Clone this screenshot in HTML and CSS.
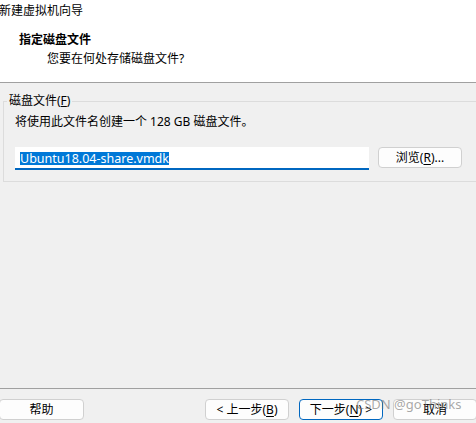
FILE: index.html
```html
<!DOCTYPE html>
<html>
  <head>
    <meta charset="utf-8">
    <title>新建虚拟机向导</title>
    <link rel="stylesheet" href="styles.css">
  </head>
  <body>

    <div class="header">
      <div class="win-title">新建虚拟机向导</div>
      <div class="step-title">指定磁盘文件</div>
      <div class="step-sub">您要在何处存储磁盘文件?</div>
    </div>

    <div class="content">
      <fieldset class="group">
	<legend>磁盘文件(<u>F</u>)</legend>
	<div class="group-body">
	  <p class="note">将使用此文件名创建一个 128 GB 磁盘文件。</p>
	  <div class="file-row">
	    <div class="textbox"><span class="selected">Ubuntu18.04-share.vmdk</span></div>
	    <button type="button" class="btn">浏览(<u>R</u>)...</button>
	  </div>
	</div>
      </fieldset>
    </div>

    <div class="footer">
      <button type="button" class="btn btn-help">帮助</button>
      <span class="spacer"></span>
      <button type="button" class="btn">&lt; 上一步(<u>B</u>)</button>
      <button type="button" class="btn btn-default">下一步(<u>N</u>) &gt;</button>
      <button type="button" class="btn btn-cancel">取消</button>
    </div>

    <div class="watermark">CSDN @goThinks</div>

  </body>
</html>
```

FILE: styles.css
```css
html,
body {
    margin: 0;
    height: 423px;
    overflow: hidden;
}

body {
    display: flex;
    flex-direction: column;
    background: #f0f0f0;
    color: #000;
    font-family: "Noto Sans", "Noto Sans CJK SC", sans-serif;
    font-size: 12px;
    line-height: 16px;
}

.header {
    height: 82px;
    background: #fff;
    border-bottom: 1px solid #a0a0a0;
}

.win-title {
    padding-top: 3px;
    margin-left: -1px;
}

.step-title {
    margin: 13px 0 0 19px;
    font-weight: bold;
}

.step-sub {
    margin: 3px 0 0 47px;
}

.content {
    flex: 1;
}

.group {
    margin: 10px -20px 0 3px;
    padding: 0 0 11px 0;
    border: 1px solid #dcdcdc;
}

.group legend {
    margin-left: 3px;
    padding: 0 2px;
}

.group-body {
    padding: 5px 0 0 11px;
}

.note {
    margin: 0;
}

.file-row {
    display: flex;
    align-items: flex-start;
    gap: 9px;
    margin-top: 17px;
}

.textbox {
    box-sizing: border-box;
    width: 354px;
    height: 23px;
    padding: 4px 0 0 5px;
    background: #fff;
    border-bottom: 2px solid #0067c0;
}

.selected {
    display: inline-block;
    background: #0078d7;
    color: #fff;
    line-height: 13px;
    font-size: 12.5px;
}

.btn {
    box-sizing: border-box;
    width: 84px;
    height: 21px;
    padding: 0;
    background: #fdfdfd;
    border: 1px solid #d0d0d0;
    border-radius: 4px;
    font: inherit;
    color: #000;
}

.btn u {
    text-underline-offset: 2px;
}

.footer {
    display: flex;
    gap: 10px;
    height: 35px;
    padding-top: 10px;
    box-sizing: border-box;
    border-top: 1px solid #a0a0a0;
}

.footer .btn {
    flex: none;
}

.btn-help {
    width: 85px;
    margin-left: -1px;
}

.spacer {
    flex: 1;
}

.btn-default {
    border-color: #0067c0;
}

.btn-cancel {
    margin-right: -1px;
}

.watermark {
    position: absolute;
    left: 356px;
    top: 395px;
    font-size: 13px;
    line-height: 18px;
    color: rgba(110, 110, 110, 0.6);
    pointer-events: none;
}
```
